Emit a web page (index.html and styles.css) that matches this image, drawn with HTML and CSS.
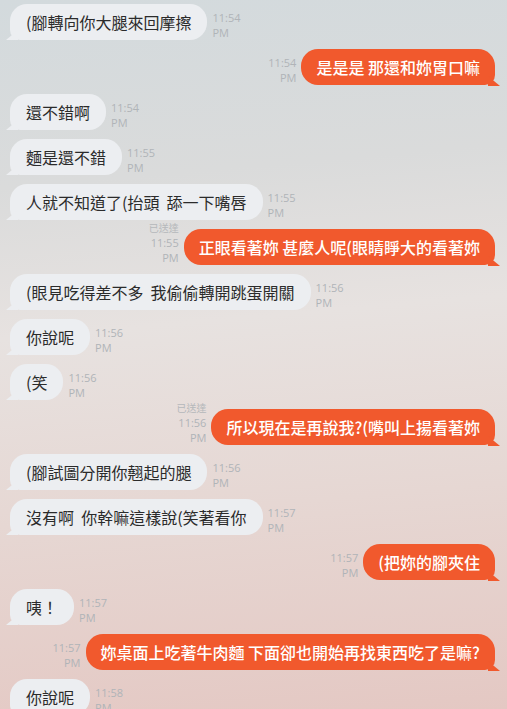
FILE: index.html
```html
<!DOCTYPE html>
<html lang="zh-Hant">
<head>
    <meta charset="UTF-8">
    <meta name="viewport" content="width=device-width, initial-scale=1.0">
    <title>Chat</title>
    <link rel="stylesheet" href="styles.css">
</head>
<body>
    <div class="chat">
        <div class="row in">
            <div class="bubble">(腳轉向你大腿來回摩擦</div>
            <div class="time">11:54<br>PM</div>
        </div>
        <div class="row out">
            <div class="time">11:54<br>PM</div>
            <div class="bubble">是是是 那還和妳胃口嘛</div>
        </div>
        <div class="row in">
            <div class="bubble">還不錯啊</div>
            <div class="time">11:54<br>PM</div>
        </div>
        <div class="row in">
            <div class="bubble">麵是還不錯</div>
            <div class="time">11:55<br>PM</div>
        </div>
        <div class="row in">
            <div class="bubble">人就不知道了(抬頭  舔一下嘴唇</div>
            <div class="time">11:55<br>PM</div>
        </div>
        <div class="row out">
            <div class="time"><span class="read">已送達</span><br>11:55<br>PM</div>
            <div class="bubble">正眼看著妳 甚麼人呢(眼睛睜大的看著妳</div>
        </div>
        <div class="row in">
            <div class="bubble">(眼見吃得差不多  我偷偷轉開跳蛋開關</div>
            <div class="time">11:56<br>PM</div>
        </div>
        <div class="row in">
            <div class="bubble">你說呢</div>
            <div class="time">11:56<br>PM</div>
        </div>
        <div class="row in">
            <div class="bubble">(笑</div>
            <div class="time">11:56<br>PM</div>
        </div>
        <div class="row out">
            <div class="time"><span class="read">已送達</span><br>11:56<br>PM</div>
            <div class="bubble">所以現在是再說我?(嘴叫上揚看著妳</div>
        </div>
        <div class="row in">
            <div class="bubble">(腳試圖分開你翹起的腿</div>
            <div class="time">11:56<br>PM</div>
        </div>
        <div class="row in">
            <div class="bubble">沒有啊  你幹嘛這樣說(笑著看你</div>
            <div class="time">11:57<br>PM</div>
        </div>
        <div class="row out">
            <div class="time">11:57<br>PM</div>
            <div class="bubble">(把妳的腳夾住</div>
        </div>
        <div class="row in">
            <div class="bubble">咦！</div>
            <div class="time">11:57<br>PM</div>
        </div>
        <div class="row out">
            <div class="time">11:57<br>PM</div>
            <div class="bubble">妳桌面上吃著牛肉麵 下面卻也開始再找東西吃了是嘛?</div>
        </div>
        <div class="row in">
            <div class="bubble">你說呢</div>
            <div class="time">11:58<br>PM</div>
        </div>
    </div>
</body>
</html>
```

FILE: styles.css
```css
* {
    margin: 0;
    padding: 0;
    box-sizing: border-box;
}

html, body {
    height: 100%;
}

body {
    font-family: 'Noto Sans CJK TC', 'Noto Sans', sans-serif;
    background: linear-gradient(175deg, #d3dadd 0%, #dadbdb 25%, #e7e2e0 45%, #e6d7d3 70%, #e4c8c3 100%);
    overflow: hidden;
}

.chat {
    display: flex;
    flex-direction: column;
    gap: 9px;
    padding: 4px 12px 0 10px;
}

.row {
    display: flex;
    align-items: flex-end;
    gap: 5px;
    height: 36px;
}

.row.out {
    justify-content: flex-end;
}

.bubble {
    position: relative;
    height: 36px;
    display: flex;
    align-items: center;
    padding: 0 16px;
    font-size: 16px;
    white-space: pre;
    border-radius: 17px;
}

.in .bubble {
    background: #eceef1;
    color: #2b2b2b;
    border-bottom-left-radius: 10px;
}

.out .bubble {
    background: #f1592d;
    color: #fff;
    font-weight: 500;
    padding: 0 15px;
    border-bottom-right-radius: 10px;
}

/* little tails at the bottom corner */
.in .bubble::before {
    content: '';
    position: absolute;
    left: -4px;
    bottom: 0;
    width: 12px;
    height: 10px;
    background: #eceef1;
    clip-path: polygon(0 100%, 100% 0, 100% 100%);
}

.out .bubble::after {
    content: '';
    position: absolute;
    right: -5px;
    bottom: -1px;
    width: 12px;
    height: 10px;
    background: #f1592d;
    clip-path: polygon(0 0, 100% 100%, 0 100%);
}

.time {
    font-family: 'Open Sans', 'Noto Sans', sans-serif;
    font-size: 11px;
    line-height: 15px;
    color: #b0b4b8;
    white-space: nowrap;
}

.out .time {
    text-align: right;
}

.read {
    font-family: 'Noto Sans CJK TC', sans-serif;
    font-size: 10px;
    color: #b5b8bb;
}
```
